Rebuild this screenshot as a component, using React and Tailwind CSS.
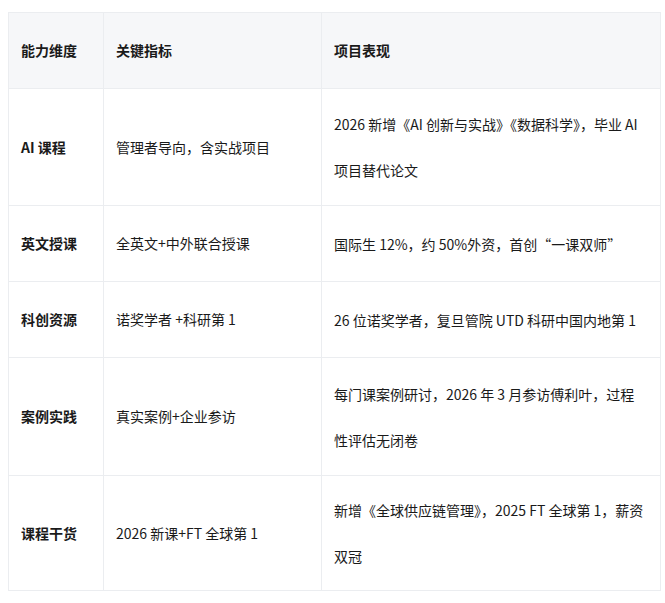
export default function App() {
  const rows = [
    ["AI 课程", "管理者导向，含实战项目", "2026 新增《AI 创新与实战》《数据科学》，毕业 AI 项目替代论文", "h-[117px]"],
    ["英文授课", "全英文+中外联合授课", "国际生 12%，约 50%外资，首创“一课双师”", "h-[76px]"],
    ["科创资源", "诺奖学者 +科研第 1", "26 位诺奖学者，复旦管院 UTD 科研中国内地第 1", "h-[76px]"],
    ["案例实践", "真实案例+企业参访", "每门课案例研讨，2026 年 3 月参访傅利叶，过程性评估无闭卷", "h-[118px]"],
    ["课程干货", "2026 新课+FT 全球第 1", "新增《全球供应链管理》，2025 FT 全球第 1，薪资双冠", "h-[115px]"],
  ];
  const td = "border border-[#ebedf0] px-3 align-middle";
  return (
    <div className="w-[665px] h-[603px] bg-white pt-[12px] pl-[8px] text-[14px] text-[#1a1a1a]" style={{fontFamily: '"Noto Sans CJK SC", "Noto Sans", sans-serif'}}>
      <table className="border-collapse w-[652px] table-fixed">
        <colgroup>
          <col className="w-[95px]" />
          <col className="w-[218px]" />
          <col className="w-[339px]" />
        </colgroup>
        <thead>
          <tr className="h-[76px] bg-[#f6f7f9] font-bold text-left">
            <th className={td}>能力维度</th>
            <th className={td}>关键指标</th>
            <th className={td}>项目表现</th>
          </tr>
        </thead>
        <tbody>
          {rows.map((r) => (
            <tr key={r[0]} className={r[3]}>
              <td className={td + " font-bold"}>{r[0]}</td>
              <td className={td}>{r[1]}</td>
              <td className={td + " leading-[46px]"}>{r[2]}</td>
            </tr>
          ))}
        </tbody>
      </table>
    </div>
  );
}
